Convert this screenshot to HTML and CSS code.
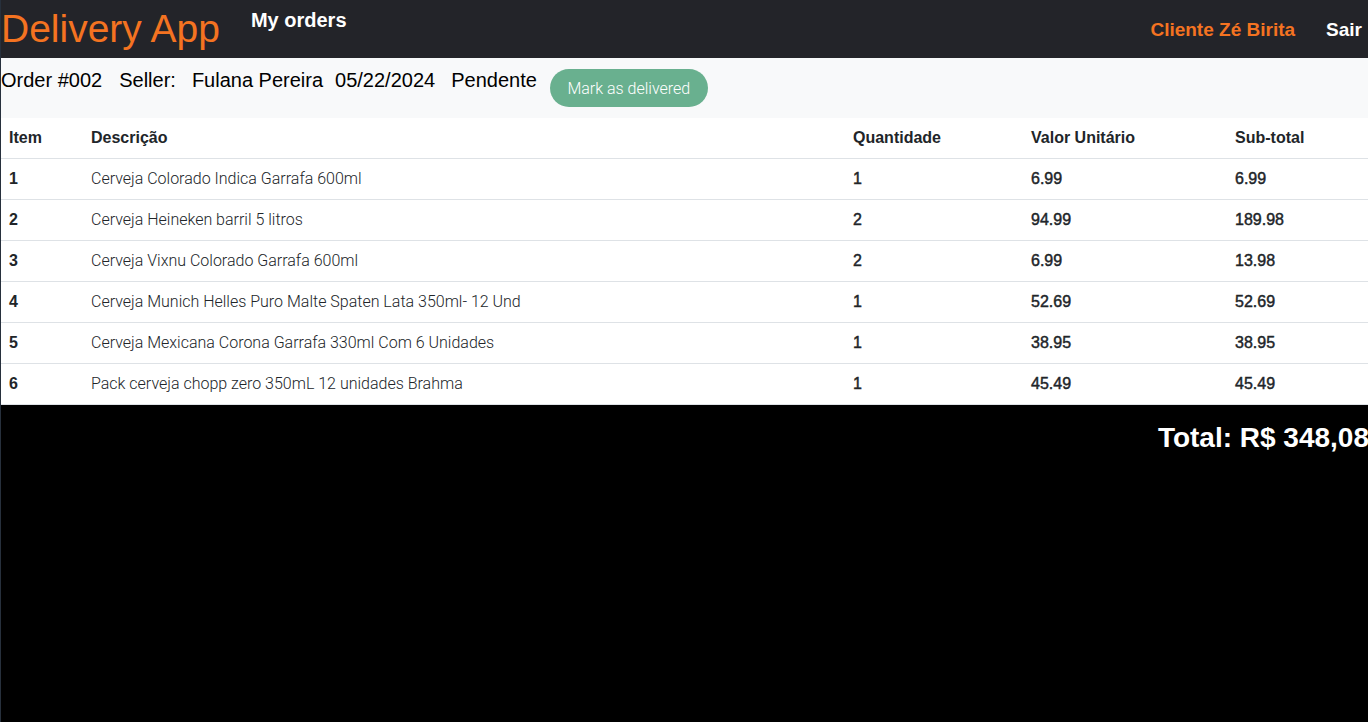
FILE: index.html
```html
<!DOCTYPE html>
<html lang="pt">
<head>
<meta charset="utf-8">
<title>Delivery App</title>
<link rel="stylesheet" href="styles.css">
</head>
<body>
<div class="page">
  <header class="topbar">
    <h1 class="logo">Delivery App</h1>
    <nav class="nav-left"><a class="nav-link">My orders</a></nav>
    <div class="nav-right">
      <span class="user-name">Cliente Zé Birita</span>
      <a class="logout">Sair</a>
    </div>
  </header>

  <section class="order-bar">
    <span class="order-info">Order #002</span>
    <span class="order-info">Seller:</span>
    <span class="order-info seller-name">Fulana Pereira</span>
    <span class="order-info">05/22/2024</span>
    <span class="order-info">Pendente</span>
    <button class="btn-deliver" type="button">Mark as delivered</button>
  </section>

  <table class="items">
    <colgroup>
      <col class="c-item"><col class="c-desc"><col class="c-qty"><col class="c-unit"><col class="c-sub">
    </colgroup>
    <thead>
      <tr><th>Item</th><th>Descrição</th><th>Quantidade</th><th>Valor Unitário</th><th>Sub-total</th></tr>
    </thead>
    <tbody>
      <tr><th>1</th><td class="desc">Cerveja Colorado Indica Garrafa 600ml</td><td class="num">1</td><td class="num">6.99</td><td class="num">6.99</td></tr>
      <tr><th>2</th><td class="desc">Cerveja Heineken barril 5 litros</td><td class="num">2</td><td class="num">94.99</td><td class="num">189.98</td></tr>
      <tr><th>3</th><td class="desc">Cerveja Vixnu Colorado Garrafa 600ml</td><td class="num">2</td><td class="num">6.99</td><td class="num">13.98</td></tr>
      <tr><th>4</th><td class="desc">Cerveja Munich Helles Puro Malte Spaten Lata 350ml- 12 Und</td><td class="num">1</td><td class="num">52.69</td><td class="num">52.69</td></tr>
      <tr><th>5</th><td class="desc">Cerveja Mexicana Corona Garrafa 330ml Com 6 Unidades</td><td class="num">1</td><td class="num">38.95</td><td class="num">38.95</td></tr>
      <tr><th>6</th><td class="desc">Pack cerveja chopp zero 350mL 12 unidades Brahma</td><td class="num">1</td><td class="num">45.49</td><td class="num">45.49</td></tr>
    </tbody>
  </table>

  <div class="total-row">
    <span class="total">Total: R$ 348,08</span>
  </div>
</div>
</body>
</html>
```

FILE: styles.css
```css
* { box-sizing: border-box; }

html, body {
  margin: 0;
  background: #000;
  overflow: hidden;
}

body {
  font-family: "Liberation Sans", Arial, sans-serif;
  color: #212529;
}

.page {
  border-left: 1px solid #27303c;
  min-height: 722px;
  width: 1368px;
}

/* Header */
.topbar {
  display: flex;
  align-items: flex-start;
  height: 58px;
  background: #232429;
}

.logo {
  margin: 6px 0 0 0;
  font-size: 39px;
  line-height: 45px;
  font-weight: normal;
  color: #f47321;
}

.nav-left {
  margin: 8px 0 0 31px;
}

.nav-link {
  font-size: 20px;
  line-height: 24px;
  font-weight: bold;
  color: #ffffff;
}

.nav-right {
  margin: 18px 6px 0 auto;
  display: flex;
  gap: 31px;
  font-size: 19px;
  line-height: 24px;
  font-weight: bold;
}

.user-name { color: #f47321; }
.logout { color: #ffffff; }

/* Order bar */
.order-bar {
  display: flex;
  align-items: flex-start;
  height: 60px;
  background: #f8f9fa;
  gap: 16px;
}

.order-info {
  padding-top: 11px;
  font-size: 20px;
  line-height: 23px;
  color: #000;
}

.order-info:first-child { margin-right: 1px; }

.seller-name { margin-right: -4px; }

.btn-deliver {
  margin: 11px 0 0 -3px;
  height: 38px;
  width: 158px;
  padding: 0;
  border: none;
  border-radius: 19px;
  background: #69b08f;
  color: #fff;
  font-family: Roboto, "Liberation Sans", sans-serif;
  font-weight: 300;
  font-size: 16px;
}

/* Table */
.items {
  width: 1367px;
  table-layout: fixed;
  border-collapse: collapse;
  background: #fff;
}

.c-item { width: 82px; }
.c-desc { width: 762px; }
.c-qty { width: 178px; }
.c-unit { width: 204px; }
.c-sub { width: 141px; }

.items th,
.items td {
  padding: 8px;
  font-size: 16px;
  line-height: 24px;
  text-align: left;
  white-space: nowrap;
  border-bottom: 1px solid #dee2e6;
  color: #212529;
}

.items th { font-weight: bold; }

.items td.desc {
  font-family: Roboto, "Liberation Sans", sans-serif;
  font-weight: 300;
}

.items td.num {
  font-weight: normal;
  -webkit-text-stroke: 0.45px #212529;
}

/* Total */
.total-row {
  display: flex;
  justify-content: flex-end;
  margin-top: 17px;
}

.total {
  flex: none;
  margin-right: -1px;
  font-size: 28px;
  line-height: 32px;
  font-weight: bold;
  color: #fff;
}
```
